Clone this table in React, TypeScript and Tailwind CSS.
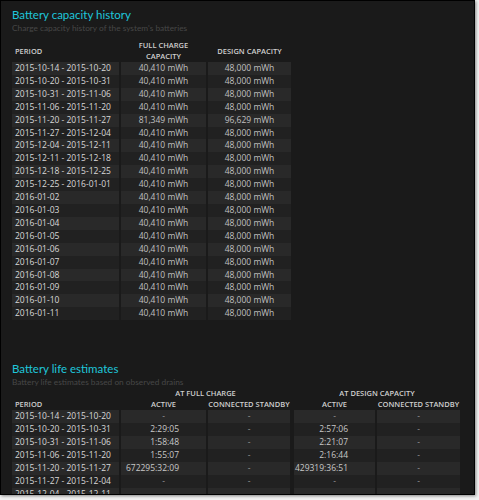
import React from "react";

const capacityRows: [string, string, string][] = [
  ["2015-10-14 - 2015-10-20", "40,410 mWh", "48,000 mWh"],
  ["2015-10-20 - 2015-10-31", "40,410 mWh", "48,000 mWh"],
  ["2015-10-31 - 2015-11-06", "40,410 mWh", "48,000 mWh"],
  ["2015-11-06 - 2015-11-20", "40,410 mWh", "48,000 mWh"],
  ["2015-11-20 - 2015-11-27", "81,349 mWh", "96,629 mWh"],
  ["2015-11-27 - 2015-12-04", "40,410 mWh", "48,000 mWh"],
  ["2015-12-04 - 2015-12-11", "40,410 mWh", "48,000 mWh"],
  ["2015-12-11 - 2015-12-18", "40,410 mWh", "48,000 mWh"],
  ["2015-12-18 - 2015-12-25", "40,410 mWh", "48,000 mWh"],
  ["2015-12-25 - 2016-01-01", "40,410 mWh", "48,000 mWh"],
  ["2016-01-02", "40,410 mWh", "48,000 mWh"],
  ["2016-01-03", "40,410 mWh", "48,000 mWh"],
  ["2016-01-04", "40,410 mWh", "48,000 mWh"],
  ["2016-01-05", "40,410 mWh", "48,000 mWh"],
  ["2016-01-06", "40,410 mWh", "48,000 mWh"],
  ["2016-01-07", "40,410 mWh", "48,000 mWh"],
  ["2016-01-08", "40,410 mWh", "48,000 mWh"],
  ["2016-01-09", "40,410 mWh", "48,000 mWh"],
  ["2016-01-10", "40,410 mWh", "48,000 mWh"],
  ["2016-01-11", "40,410 mWh", "48,000 mWh"],
];

const lifeRows: [string, string, string, string, string][] = [
  ["2015-10-14 - 2015-10-20", "-", "-", "-", "-"],
  ["2015-10-20 - 2015-10-31", "2:29:05", "-", "2:57:06", "-"],
  ["2015-10-31 - 2015-11-06", "1:58:48", "-", "2:21:07", "-"],
  ["2015-11-06 - 2015-11-20", "1:55:07", "-", "2:16:44", "-"],
  ["2015-11-20 - 2015-11-27", "672295:32:09", "-", "429319:36:51", "-"],
  ["2015-11-27 - 2015-12-04", "-", "-", "-", "-"],
  ["2015-12-04 - 2015-12-11", "-", "-", "-", "-"],
];

const rowBg = (i: number) => (i % 2 === 0 ? "bg-[#292929]" : "bg-[#212121]");

const Time = ({ value, bg }: { value: string; bg: string }) =>
  value === "-" ? (
    <div className={`${bg} text-center text-[#9a9a9a]`}>-</div>
  ) : (
    <div className={`${bg} text-right pr-[27px] text-[#c8c8c8]`}>{value}</div>
  );

const th = "text-[7.5px] leading-[11px] font-semibold text-[#cfcfcf] whitespace-nowrap";

const App = () => {
  return (
    <div className="w-[479px] h-[500px] bg-[#f2f2f2] overflow-hidden">
      <div
        className="w-[475px] h-[495px] bg-[#1a1a1a] border border-black shadow-[1px_1px_3px_rgba(0,0,0,0.45)] overflow-hidden px-[11px] pt-[5px]"
        style={{ fontFamily: '"Open Sans", "Noto Sans", sans-serif' }}
      >
        <h1 className="font-['Lato',sans-serif] text-[11.5px] leading-[17px] text-[#1fc6db]">
          Battery capacity history
        </h1>
        <p className="font-['Lato',sans-serif] text-[8.3px] leading-[11px] text-[#474747]">
          Charge capacity history of the system's batteries
        </p>

        <div className="mt-[6px] grid grid-cols-[107px_85px_83px] gap-x-[2px] text-[8.5px] leading-[12.9px]">
          <div className={`${th} flex items-center pl-[3px]`}>PERIOD</div>
          <div className={`${th} text-center leading-[10px]`}>
            FULL CHARGE
            <br />
            CAPACITY
          </div>
          <div className={`${th} flex items-center justify-center`}>DESIGN CAPACITY</div>
          {capacityRows.map((r, i) => (
            <React.Fragment key={i}>
              <div className={`${rowBg(i)} pl-[3px] text-[#d8d8d8]`}>{r[0]}</div>
              <div className={`${rowBg(i)} text-center text-[#c0c0c0]`}>{r[1]}</div>
              <div className={`${rowBg(i)} text-center text-[#c0c0c0]`}>{r[2]}</div>
            </React.Fragment>
          ))}
        </div>

        <h1 className="mt-[40px] font-['Lato',sans-serif] text-[11.5px] leading-[17px] text-[#1fc6db]">
          Battery life estimates
        </h1>
        <p className="font-['Lato',sans-serif] text-[8.3px] leading-[11px] text-[#474747]">
          Battery life estimates based on observed drains
        </p>

        <div className="grid grid-cols-[107px_85px_82px_0px_81px_83px] gap-x-[2px] text-[8.5px] leading-[12.9px]">
          <div />
          <div className={`${th} col-span-2 text-center`}>AT FULL CHARGE</div>
          <div />
          <div className={`${th} col-span-2 text-center`}>AT DESIGN CAPACITY</div>
          <div className={`${th} pl-[3px]`}>PERIOD</div>
          <div className={`${th} text-center`}>ACTIVE</div>
          <div className={`${th} text-center`}>CONNECTED STANDBY</div>
          <div />
          <div className={`${th} text-center`}>ACTIVE</div>
          <div className={`${th} text-center`}>CONNECTED STANDBY</div>
          {lifeRows.map((r, i) => (
            <React.Fragment key={i}>
              <div className={`${rowBg(i)} pl-[3px] text-[#d8d8d8]`}>{r[0]}</div>
              <Time value={r[1]} bg={rowBg(i)} />
              <Time value={r[2]} bg={rowBg(i)} />
              <div />
              <Time value={r[3]} bg={rowBg(i)} />
              <Time value={r[4]} bg={rowBg(i)} />
            </React.Fragment>
          ))}
        </div>
      </div>
    </div>
  );
};

export default App;
